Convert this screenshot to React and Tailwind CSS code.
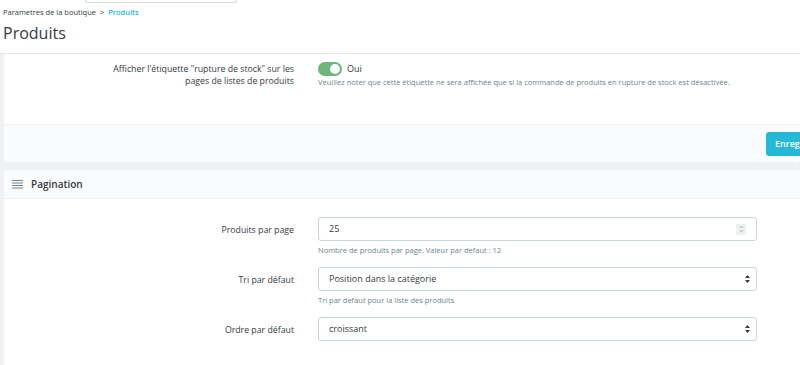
function Toggle() {
  return (
    <div className="flex items-center gap-[5px]">
      <div className="w-[24px] h-[14px] rounded-full bg-[#6cb57b] flex items-center justify-end pr-[2px]">
        <div className="w-[10px] h-[10px] rounded-full bg-white" />
      </div>
      <span className="text-[9px] text-[#363a41]">Oui</span>
    </div>
  )
}

function Field({ label, children, help }) {
  return (
    <div className="flex">
      <div className="w-[290px] shrink-0 text-right text-[8.75px] text-[#363a41] pt-[7px] leading-[12px]">{label}</div>
      <div className="ml-[24px] w-[439px]">
        {children}
        {help && <p className="text-[7.5px] text-[#6c868e] mt-[4px] leading-[10px]">{help}</p>}
      </div>
    </div>
  )
}

function SelectBox({ value }) {
  return (
    <div className="h-[24px] border border-[#c9d7db] rounded-[3px] bg-white flex items-center px-[10px] text-[9px] text-[#363a41]">
      <span className="flex-1">{value}</span>
      <svg width="5" height="8" viewBox="0 0 5 8" className="mr-[-4px]">
        <path d="M2.5 0 L5 3 H0 Z M2.5 8 L5 5 H0 Z" fill="#363a41" />
      </svg>
    </div>
  )
}

export default function App() {
  return (
    <div className="w-[800px] h-[365px] overflow-hidden bg-[#eff1f2] font-['Open_Sans',sans-serif]">
      <div className="bg-white h-[54px] border-b border-[#e4e7e9]">
        <div className="ml-[85px] w-[152px] h-[3px] border-x border-b border-[#d4dbde] rounded-b-[4px]" />
        <div className="px-[3px] pt-[3px] text-[7.5px] leading-[12px] text-[#363a41]">
          Parametres de la boutique <span className="mx-[2px]">&gt;</span>{' '}
          <span className="text-[#25b9d7] font-semibold">Produits</span>
        </div>
        <h1 className="px-[3px] mt-[4px] text-[16px] leading-[22px] text-[#363a41]">Produits</h1>
      </div>

      <div className="ml-[4px] bg-white rounded-b-[4px]">
        <div className="h-[70px] pt-[8px]">
          <div className="flex">
            <div className="w-[290px] shrink-0 text-right text-[8.75px] leading-[12px] text-[#363a41] pt-[1px]">
              Afficher l'étiquette "rupture de stock" sur les
              <br />
              pages de listes de produits
            </div>
            <div className="ml-[24px]">
              <Toggle />
              <p className="text-[7.5px] text-[#6c868e] mt-[1px] leading-[10px]">
                Veuillez noter que cette étiquette ne sera affichée que si la commande de produits en rupture de stock est désactivée.
              </p>
            </div>
          </div>
        </div>
        <div className="h-[38px] bg-[#fafbfc] border-t border-[#eef0f1] rounded-b-[4px] flex items-center pl-[762px]">
          <button className="shrink-0 h-[24px] bg-[#25b9d7] text-white text-[9px] font-semibold rounded-[3px] px-[9px] whitespace-nowrap">
            Enregistrer
          </button>
        </div>
      </div>

      <div className="ml-[4px] mt-[8px] bg-white rounded-t-[4px] h-[200px]">
        <div className="h-[29px] bg-[#fafbfc] border-b border-[#eef0f1] rounded-t-[4px] flex items-center gap-[8px] px-[8px]">
          <svg width="11" height="10" viewBox="0 0 11 10">
            <path d="M0 1.5 H11 M0 4 H11 M0 6.5 H11 M0 9 H11" stroke="#6c868e" strokeWidth="1.2" />
          </svg>
          <span className="text-[10px] font-semibold text-[#363a41]">Pagination</span>
        </div>
        <div className="pt-[18px] flex flex-col gap-[12px]">
          <Field label="Produits par page" help="Nombre de produits par page. Valeur par defaut : 12">
            <div className="h-[24px] border border-[#c9d7db] rounded-[3px] bg-white flex items-center px-[10px] text-[9px] text-[#363a41]">
              <span className="flex-1">25</span>
              <div className="w-[10px] h-[11px] bg-[#eef0f1] rounded-[1px] flex items-center justify-center">
                <svg width="5" height="8" viewBox="0 0 5 8">
                  <path d="M0.8 3 L2.5 1.2 L4.2 3 M0.8 5 L2.5 6.8 L4.2 5" stroke="#9aa5a9" strokeWidth="0.8" fill="none" />
                </svg>
              </div>
            </div>
          </Field>
          <Field label="Tri par défaut" help="Tri par defaut pour la liste des produits">
            <SelectBox value="Position dans la catégorie" />
          </Field>
          <Field label="Ordre par défaut">
            <SelectBox value="croissant" />
          </Field>
        </div>
      </div>
    </div>
  )
}
